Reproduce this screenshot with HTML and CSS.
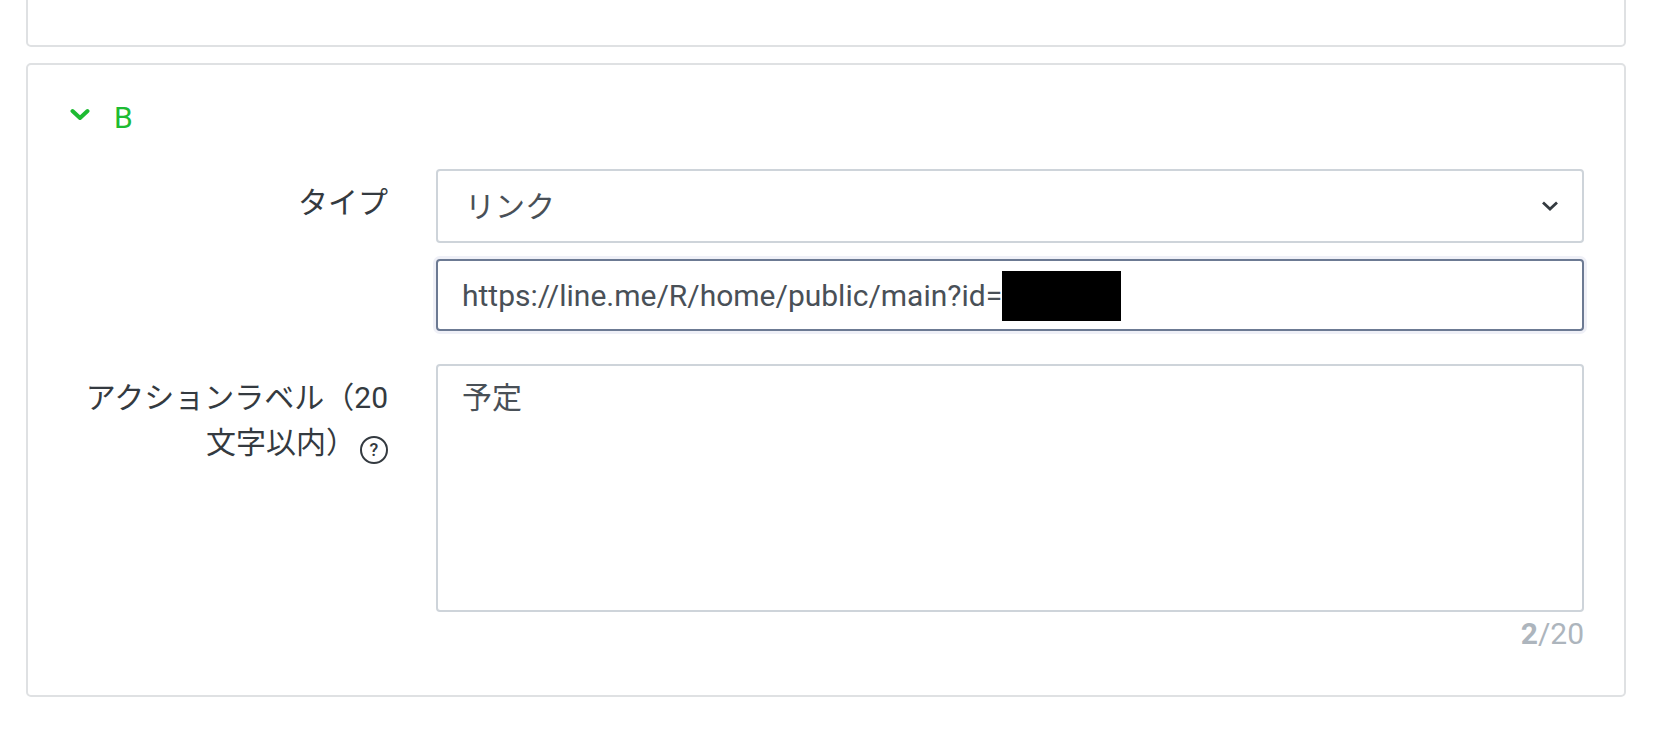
FILE: index.html
```html
<!DOCTYPE html>
<html lang="ja">
<head>
    <meta charset="UTF-8">
    <meta name="viewport" content="width=device-width, initial-scale=1.0">
    <title>アクション</title>
    <link rel="stylesheet" href="styles.css">
</head>
<body>
    <div class="page">
        <div class="card card-top"></div>

        <div class="card card-action">
            <div class="card-title">
                <svg class="title-arrow" viewBox="0 0 20 13" width="20" height="13">
                    <path d="M2.5 3 L10 10 L17.5 3" fill="none" stroke="#1dbb32" stroke-width="4" stroke-linecap="round" stroke-linejoin="round"/>
                </svg>
                <span>B</span>
            </div>

            <div class="form-row row-type">
                <label class="form-label">タイプ</label>
                <div class="form-field">
                    <div class="select-wrap">
                        <select class="control select">
                            <option>リンク</option>
                        </select>
                        <svg class="select-arrow" viewBox="0 0 16 10" width="16" height="10">
                            <path d="M1 1.5 L8 8 L15 1.5" fill="none" stroke="#343a40" stroke-width="2.8"/>
                        </svg>
                    </div>
                    <div class="input-wrap">
                        <input class="control input" type="text" value="https://line.me/R/home/public/main?id=">
                        <div class="redact"></div>
                    </div>
                </div>
            </div>

            <div class="form-row">
                <label class="form-label">アクションラベル（20文字以内）<span class="help">?</span></label>
                <div class="form-field">
                    <textarea class="control textarea">予定</textarea>
                    <div class="counter"><b>2</b>/20</div>
                </div>
            </div>
        </div>
    </div>
</body>
</html>
```

FILE: styles.css
```css
html, body {
  margin: 0;
  padding: 0;
  height: 100%;
  overflow: hidden;
  background: #fff;
}
body {
  font-family: Roboto, "Noto Sans CJK JP", sans-serif;
  font-size: 30px;
  color: #343a40;
}
.page {
  width: 1600px;
  margin-left: 26px;
}
.card {
  box-sizing: border-box;
  border: 2px solid #dfe1e3;
  border-radius: 5px;
  background: #fff;
}
.card-top {
  height: 57px;
  margin-top: -10px;
  margin-bottom: 16px;
}
.card-action {
  height: 634px;
  padding: 0 40px;
}
.card-title {
  display: flex;
  align-items: center;
  height: 104px;
  color: #1dbb32;
  padding-left: 2px;
}
.title-arrow {
  margin-right: 24px;
  margin-top: -5px;
}
.form-row {
  display: flex;
  align-items: flex-start;
}
.row-type {
  margin-bottom: 33px;
}
.form-label {
  flex: 0 0 320px;
  box-sizing: border-box;
  text-align: right;
  line-height: 45px;
  padding-top: 11px;
}
.help {
  display: inline-block;
  box-sizing: border-box;
  width: 28px;
  height: 28px;
  margin-left: 4px;
  border: 2px solid #343a40;
  border-radius: 50%;
  font-size: 18px;
  font-weight: 500;
  line-height: 24px;
  text-align: center;
  vertical-align: -3px;
}
.form-field {
  margin-left: 48px;
  width: 1148px;
}
.control {
  display: block;
  box-sizing: border-box;
  width: 100%;
  margin: 0;
  font-family: inherit;
  font-size: 30px;
  color: #495057;
  background: #fff;
  border: 2px solid #ced4da;
  border-radius: 4px;
  outline: none;
}
.select-wrap, .input-wrap {
  position: relative;
}
.select {
  height: 74px;
  padding: 0 27px;
  appearance: none;
  -webkit-appearance: none;
}
.select-arrow {
  position: absolute;
  right: 26px;
  top: 32px;
}
.input-wrap {
  margin-top: 16px;
}
.input {
  height: 72px;
  padding: 0 24px;
  border-color: #6c7a93;
  box-shadow: 0 0 0 3px #eff0f7;
}
.redact {
  position: absolute;
  left: 566px;
  top: 12px;
  width: 119px;
  height: 50px;
  background: #000;
}
.textarea {
  height: 248px;
  padding: 11px 24px;
  line-height: 42px;
  resize: none;
}
.counter {
  text-align: right;
  color: #adb5bd;
  line-height: 44px;
}
```
